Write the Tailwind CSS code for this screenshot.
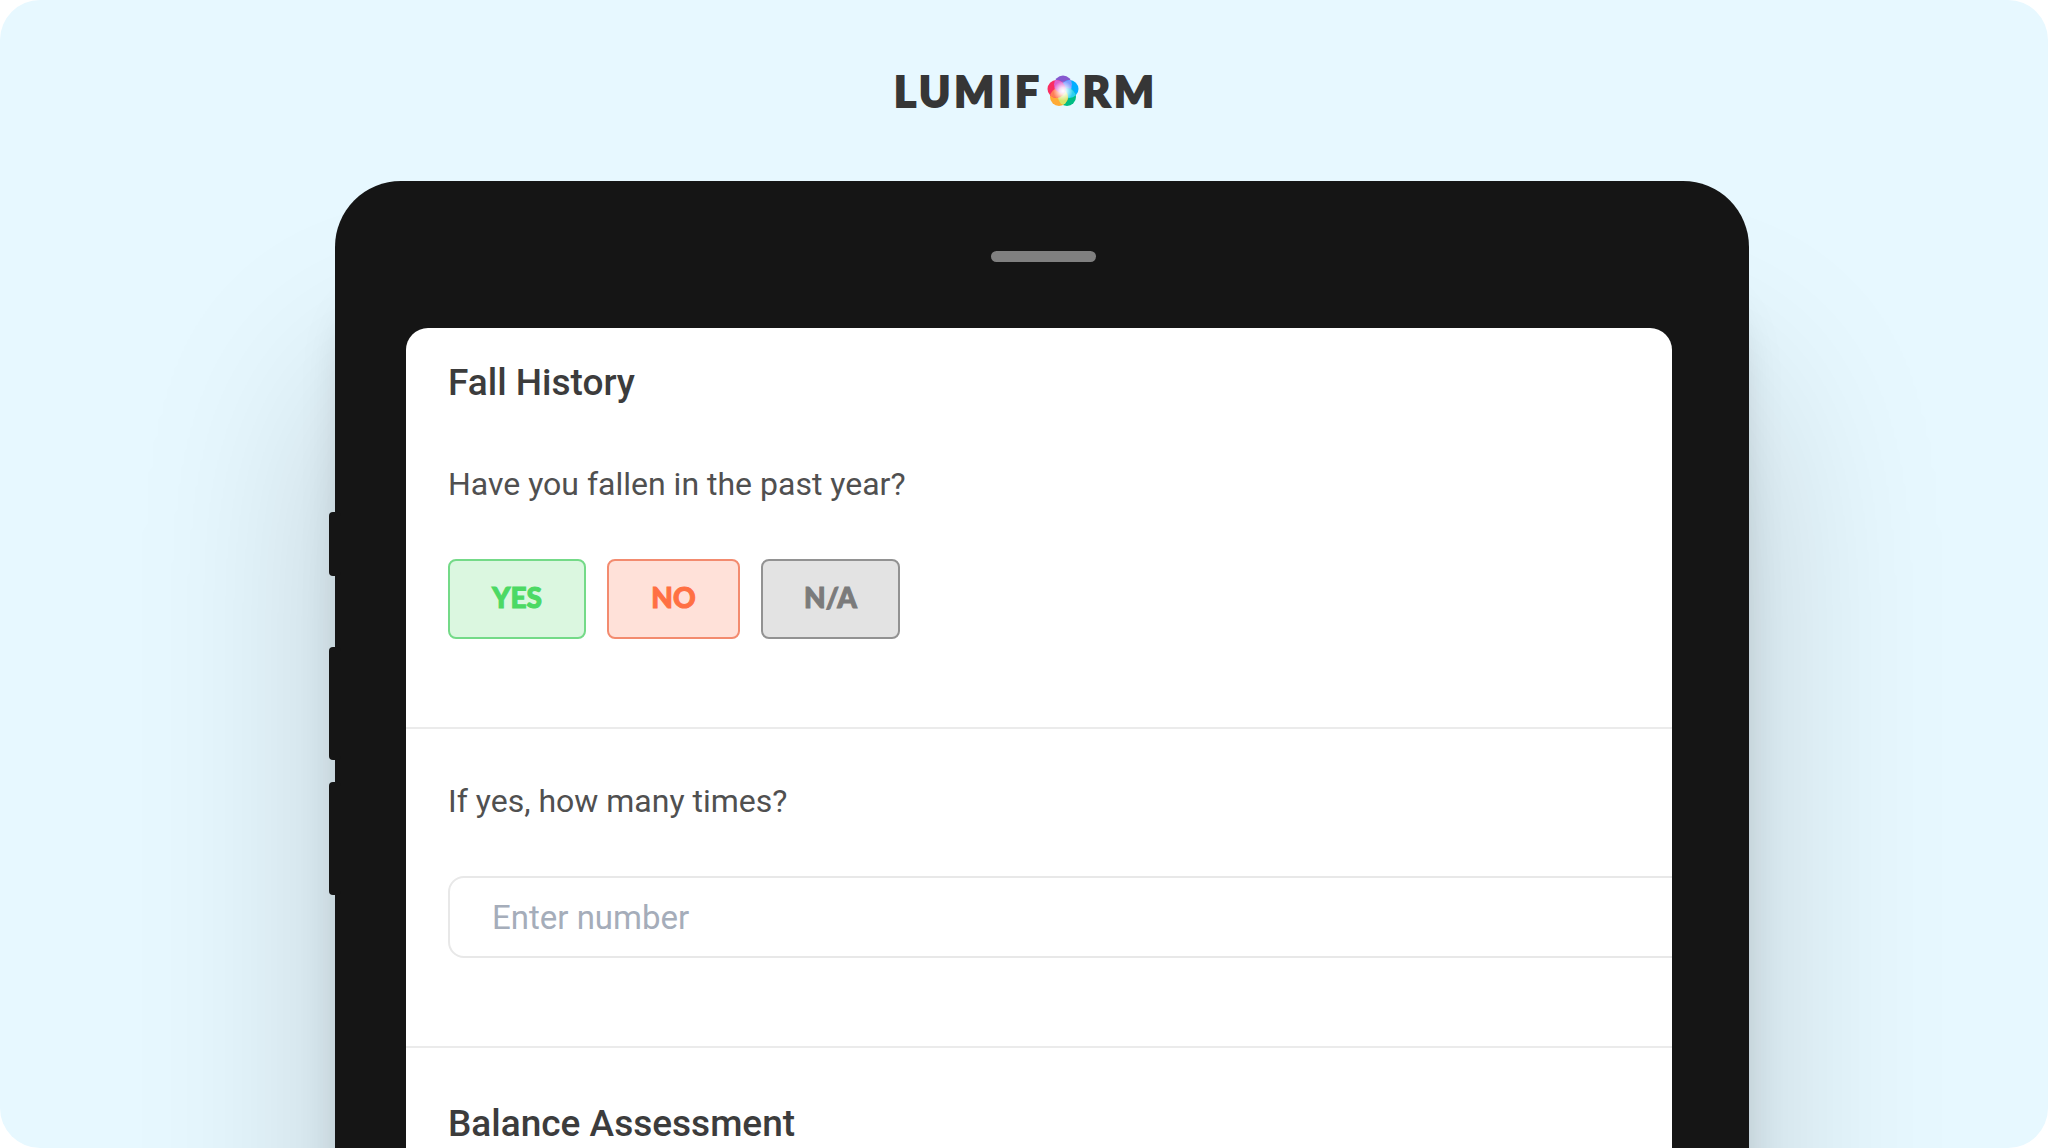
<!DOCTYPE html>
<html lang="en">
<head>
<meta charset="utf-8">
<meta name="viewport" content="width=device-width, initial-scale=1">
<title>Lumiform – Fall History</title>
<script src="https://cdn.jsdelivr.net/npm/@tailwindcss/browser@4"></script>
</head>
<body class="bg-white font-['Roboto',sans-serif] text-[#3c3c3c]">
<div class="flex h-screen flex-col overflow-hidden rounded-[40px] bg-[#e7f8ff]">
  <header class="flex h-[181px] shrink-0 items-center justify-center pl-1">
    <a href="#" aria-label="Lumiform" class="flex items-center gap-1 font-['Lato',sans-serif] text-[42px] leading-none font-black tracking-[4px] text-[#363636] [-webkit-text-stroke:2px_#363636]">
      <span>LUMIF</span>
      <svg class="size-8" viewBox="0 0 32 32" aria-hidden="true">
        <defs>
          <clipPath id="top"><circle cx="16" cy="9.500" r="9"/></clipPath>
          <clipPath id="right"><circle cx="22.500" cy="14" r="9"/></clipPath>
          <clipPath id="low-right"><circle cx="20" cy="22" r="9"/></clipPath>
          <clipPath id="low-left"><circle cx="12" cy="22" r="9"/></clipPath>
          <clipPath id="left"><circle cx="9.500" cy="14" r="9"/></clipPath>
          <radialGradient id="glow" gradientUnits="userSpaceOnUse" cx="16" cy="16" r="10">
            <stop offset="0" stop-color="#fff"/>
            <stop offset="0.350" stop-color="#fff" stop-opacity="0.800"/>
            <stop offset="1" stop-color="#fff" stop-opacity="0"/>
          </radialGradient>
        </defs>
        <circle cx="16" cy="9.500" r="9" fill="#8658cf"/>
        <circle cx="22.500" cy="14" r="9" fill="#00aeff"/>
        <circle cx="20" cy="22" r="9" fill="#00bd83"/>
        <circle cx="12" cy="22" r="9" fill="#ffab35"/>
        <circle cx="9.500" cy="14" r="9" fill="#fa2d62"/>
        <circle cx="22.500" cy="14" r="9" fill="#7f9dff" clip-path="url(#top)"/>
        <circle cx="20" cy="22" r="9" fill="#2bd0f0" clip-path="url(#right)"/>
        <circle cx="12" cy="22" r="9" fill="#d5e56a" clip-path="url(#low-right)"/>
        <circle cx="9.500" cy="14" r="9" fill="#ff7d55" clip-path="url(#low-left)"/>
        <circle cx="9.500" cy="14" r="9" fill="#dd5fd0" clip-path="url(#top)"/>
        <circle cx="16" cy="16" r="10" fill="url(#glow)"/>
      </svg>
      <span>RM</span>
    </a>
  </header>

  <main class="flex min-h-0 grow pr-[299px] pl-[335px]">
    <div class="relative flex grow flex-col items-center self-start rounded-t-[66px] bg-[#151515] pr-[77px] pl-[71px] shadow-[0_110px_50px_-20px_rgba(0,0,0,0.25),0_200px_200px_rgba(0,0,0,0.18)]">
      <div class="absolute top-[331px] -left-[6px] h-16 w-3 rounded-sm bg-[#151515]"></div>
      <div class="absolute top-[466px] -left-[6px] h-[113px] w-3 rounded-sm bg-[#151515]"></div>
      <div class="absolute top-[601px] -left-[6px] h-[113px] w-3 rounded-sm bg-[#151515]"></div>
      <div class="flex h-[147px] shrink-0 items-center pt-1 pl-2">
        <div class="h-[11px] w-[105px] rounded-full bg-[#808080]"></div>
      </div>
      <form class="h-[1200px] w-full overflow-hidden rounded-t-[22px] bg-white">
        <section class="border-b-2 border-[#ebebeb] px-[42px] pt-[33px] pb-[88px]">
          <h1 class="text-[37px] leading-[44px] font-medium">Fall History</h1>
          <fieldset class="mt-[59px]">
            <legend class="text-[32px] leading-10 text-[#505050]">Have you fallen in the past year?</legend>
            <div class="mt-[55px] flex gap-[21px] font-['Lato',sans-serif] text-[28px] font-black">
              <button type="button" class="h-20 w-[138px] rounded-lg border-2 border-[#74da88] bg-[#dbf7e0] pb-1 text-[#4cd964] [-webkit-text-stroke:1px_#4cd964]">YES</button>
              <button type="button" class="h-20 w-[133px] rounded-lg border-2 border-[#f38b6f] bg-[#ffe1d9] pb-1 text-[#ff7043] [-webkit-text-stroke:1px_#ff7043]">NO</button>
              <button type="button" class="h-20 w-[139px] rounded-lg border-2 border-[#929292] bg-[#e3e3e3] pb-1 text-[#7b7b7b] [-webkit-text-stroke:1px_#7b7b7b]">N/A</button>
            </div>
          </fieldset>
        </section>
        <section class="border-b-2 border-[#ebebeb] pt-[52px] pb-[88px] pl-[42px]">
          <label for="times" class="block text-[32px] leading-10 text-[#505050]">If yes, how many times?</label>
          <input id="times" type="text" inputmode="numeric" placeholder="Enter number" class="mt-[55px] block h-[82px] w-[110%] rounded-2xl border-2 border-[#e8e8e8] bg-white px-[42px] text-[33px] placeholder:text-[#a5adba]">
        </section>
        <section class="px-[42px] pt-[54px]">
          <h2 class="text-[37px] leading-[44px] font-medium">Balance Assessment</h2>
        </section>
      </form>
    </div>
  </main>
</div>
</body>
</html>
